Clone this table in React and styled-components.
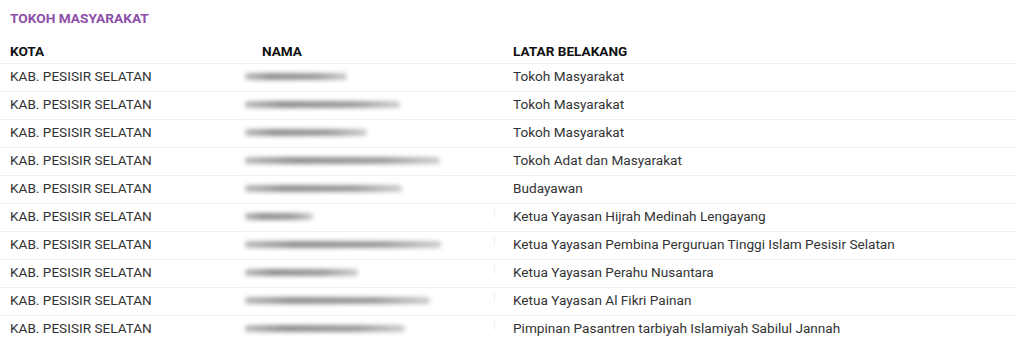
import React from "react";
import styled, { createGlobalStyle } from "styled-components";

const Global = createGlobalStyle`
  html, body { margin: 0; padding: 0; background: #fff; }
  body { font-family: Roboto, "Liberation Sans", Arial, sans-serif; }
`;

const Wrap = styled.div`
  width: 1016px;
  padding: 0;
`;

const Title = styled.h3`
  margin: 0;
  padding: 10px 10px 0;
  height: 29px;
  box-sizing: border-box;
  font-size: 13.7px;
  line-height: 17px;
  font-weight: 700;
  color: #8d4fa8;
`;

const Row = styled.div`
  display: grid;
  grid-template-columns: 252px 251px 1fr;
  height: ${(p) => (p.$head ? "34px" : "28px")};
  box-sizing: border-box;
  border-top: ${(p) => (p.$head ? "none" : "1px solid #efefef")};
  align-items: ${(p) => (p.$head ? "end" : "center")};
  padding-bottom: ${(p) => (p.$head ? "3px" : "2px")};
`;

const Cell = styled.div`
  padding: 0 10px;
  font-size: 13.6px;
  line-height: 17px;
  color: ${(p) => (p.$head ? "#111" : "#333")};
  font-weight: ${(p) => (p.$head ? 700 : 400)};
  white-space: nowrap;
  display: flex;
  align-items: center;
  position: relative;
`;

const Blur = styled.span`
  display: block;
  height: 7px;
  margin-left: -17px;
  border-radius: 3px;
  background: linear-gradient(90deg, #bcbcbc, #909090 25%, #9c9c9c 70%, #cfcfcf);
  filter: blur(2px);
`;

const Tick = styled.span`
  position: absolute;
  right: 8px;
  top: -4px;
  width: 1px;
  height: 9px;
  background: #eee;
`;

const rows = [
  [102, "Tokoh Masyarakat"],
  [155, "Tokoh Masyarakat"],
  [122, "Tokoh Masyarakat"],
  [195, "Tokoh Adat dan Masyarakat"],
  [157, "Budayawan"],
  [68, "Ketua Yayasan Hijrah Medinah Lengayang", true],
  [196, "Ketua Yayasan Pembina Perguruan Tinggi Islam Pesisir Selatan", true],
  [113, "Ketua Yayasan Perahu Nusantara", true],
  [185, "Ketua Yayasan Al Fikri Painan", true],
  [160, "Pimpinan Pasantren tarbiyah Islamiyah Sabilul Jannah", true],
];

export default function App() {
  return (
    <Wrap>
      <Global />
      <Title>TOKOH MASYARAKAT</Title>
      <Row $head>
        <Cell $head>KOTA</Cell>
        <Cell $head>NAMA</Cell>
        <Cell $head>LATAR BELAKANG</Cell>
      </Row>
      {rows.map(([w, bg, tick], i) => (
        <Row key={i}>
          <Cell>KAB. PESISIR SELATAN</Cell>
          <Cell>
            <Blur style={{ width: w }} />
            {tick && <Tick />}
          </Cell>
          <Cell>{bg}</Cell>
        </Row>
      ))}
    </Wrap>
  );
}
